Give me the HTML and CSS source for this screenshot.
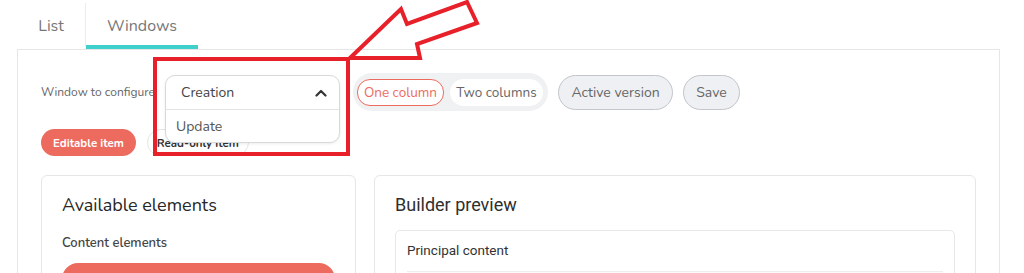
FILE: index.html
```html
<!DOCTYPE html>
<html lang="en">
<head>
<meta charset="UTF-8">
<title>Windows configuration</title>
<link rel="stylesheet" href="styles.css">
</head>
<body>
<nav class="tabs">
  <a class="tab" href="#">List</a>
  <a class="tab active" href="#">Windows</a>
</nav>
<section class="panel">
  <div class="toolbar">
    <span class="toolbar-label">Window to configure</span>
    <div class="select">
      <div class="select-menu">
        <div class="select-head">
          <span>Creation</span>
          <svg width="12" height="8" viewBox="0 0 12 8" fill="none" stroke="#333" stroke-width="2.2" stroke-linecap="round" stroke-linejoin="round"><path d="M1.5 6.5 6 2l4.5 4.5"/></svg>
        </div>
        <div class="select-option">Update</div>
      </div>
    </div>
    <div class="segmented">
      <span class="seg-item on">One column</span>
      <span class="seg-item">Two columns</span>
    </div>
    <button class="btn-grey">Active version</button>
    <button class="btn-grey">Save</button>
  </div>
  <div class="legend">
    <span class="pill pill-edit">Editable item</span>
    <span class="pill pill-read">Read-only item</span>
  </div>
  <div class="builder">
    <div class="card">
      <h2 class="card-title">Available elements</h2>
      <div class="card-sub">Content elements</div>
      <div class="element-btn"></div>
    </div>
    <div class="card card-preview">
      <h2 class="card-title preview-title">Builder preview</h2>
      <div class="preview-box">
        <div class="preview-label">Principal content</div>
        <div class="preview-slot"></div>
      </div>
    </div>
  </div>
</section>
<svg class="annot" width="1024" height="273" viewBox="0 0 1024 273" fill="none" stroke="#e8202a" stroke-width="4" stroke-linejoin="miter">
  <rect x="155" y="59" width="193" height="95"/>
  <path d="M350 58 401 9 407 24 467 2 477 23 417 44 420 58Z"/>
</svg>
</body>
</html>
```

FILE: styles.css
```css
:root {
  --red: #ec6b5e;
  --teal: #3fd0cd;
  --line: #e6e6e6;
  --text: #333;
  --muted: #666;
}
body {
  margin: 0;
  background: #fff;
  font-family: 'Nunito', 'Lato', 'Open Sans', sans-serif;
  color: var(--text);
  position: relative;
  overflow: hidden;
  height: 273px;
}
.tabs { display: flex; margin: 3px 0 0 17px; }
.tab {
  display: flex; align-items: center; height: 38px; padding-top: 4px;
  font-size: 16px; color: #777; text-decoration: none;
  border-bottom: 4px solid transparent;
}
.tab:first-child { border-right: 1px solid #ececec; width: 68px; justify-content: center; }
.tab.active { border-bottom-color: var(--teal); width: 112px; justify-content: center; }
.panel {
  margin: 0 24px 0 17px;
  border: 1px solid var(--line);
  padding: 23px 23px 0 23px;
  height: 300px;
}
.toolbar { display: flex; align-items: center; gap: 10px; height: 38px; }
.toolbar-label { font-size: 12px; color: var(--muted); width: 114px; white-space: nowrap; }
.select { position: relative; width: 175px; height: 34px; margin-right: 3px; }
.select-menu {
  position: absolute; top: 0; left: 0; right: 0; z-index: 2;
  background: #fff; border: 1px solid #d9d9d9; border-radius: 10px;
  box-shadow: 0 1px 3px rgba(0,0,0,0.08);
}
.select-head {
  display: flex; align-items: center; justify-content: space-between;
  height: 33px; padding: 0 12px 0 15px; font-size: 14px; color: #444;
  border-bottom: 1px solid #e3e3e3;
}
.select-option { height: 32px; display: flex; align-items: center; padding: 0 10px; font-size: 14px; color: #555; }
.segmented {
  display: flex; align-items: center; gap: 6px; height: 38px; width: 195px; box-sizing: border-box;
  padding: 0 5px 0 4px; background: #f0f1f3; border-radius: 19px;
}
.seg-item {
  display: flex; align-items: center; justify-content: center; height: 25px;
  font-size: 13.5px; color: #666; background: #fff; border-radius: 13px;
  border: 1px solid #fff;
}
.seg-item.on { color: var(--red); border-color: var(--red); width: 85px; }
.seg-item:last-child { flex: 1; }
.btn-grey {
  height: 35px; padding: 0; font: inherit; font-size: 14px; color: #666;
  background: #eef0f3; border: 1px solid #c2c5ca; border-radius: 18px;
  width: 115px;
}
.btn-grey:last-child { width: 57px; }
.legend { display: flex; gap: 11px; margin-top: 18px; }
.pill {
  display: flex; align-items: center; height: 27px; padding: 0 11px;
  font-size: 11.5px; font-weight: 700; border-radius: 14px; white-space: nowrap;
}
.pill-edit { background: var(--red); color: #fff; padding: 0 12px; }
.pill-read { background: #fff; color: #333; border: 1px solid #e4e4e4; height: 25px; padding: 0 9px; }
.builder { display: grid; grid-template-columns: 315px 1fr; gap: 18px; margin-top: 19px; }
.card {
  border: 1px solid #e6e6e6; border-radius: 6px;
  padding: 18px 20px 20px; min-height: 200px;
}
.card-title { margin: 0; font-size: 18px; line-height: 22px; font-weight: 400; color: #262626; }
.card-sub { margin-top: 18px; font-size: 13px; line-height: 18px; font-weight: 600; color: #444; }
.element-btn { margin-top: 11px; height: 40px; background: var(--red); border-radius: 16px; }
.preview-title { font-family: 'Roboto', sans-serif; font-size: 18px; color: #2f2f2f; }
.preview-box {
  margin-top: 14px; border: 1px solid #e8e8e8; border-radius: 5px;
  padding: 11px 11px 20px;
}
.preview-label { font-family: 'Roboto', sans-serif; font-size: 13.5px; line-height: 16px; color: #333; }
.preview-slot { margin-top: 13px; height: 40px; background: #fafafa; border-top: 1px solid #eee; }
.annot { position: absolute; top: 0; left: 0; pointer-events: none; z-index: 5; }
```
